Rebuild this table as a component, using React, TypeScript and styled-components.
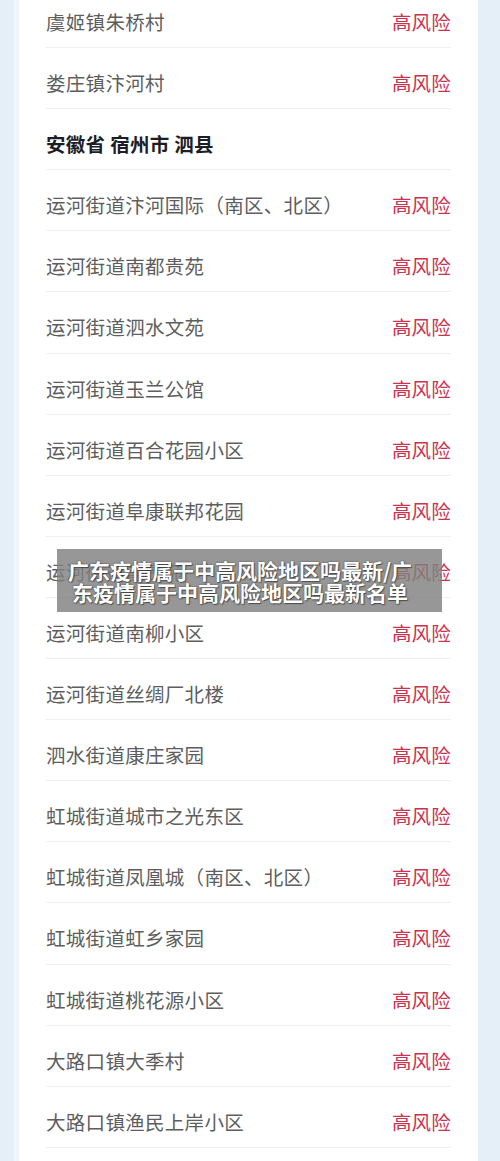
import styled, { createGlobalStyle } from 'styled-components';

const GlobalStyle = createGlobalStyle`
    html, body {
        margin: 0;
        padding: 0;
        background: #e4eff8;
        font-family: 'Noto Sans CJK SC', 'Noto Sans', sans-serif;
    }
`;

const Page = styled.div`
    position: relative;
    width: 500px;
    height: 1161px;
    overflow: hidden;
    background: #e4eff8;
`;

const Card = styled.div`
    margin: -13px 0 0 19px;
    width: 459px;
    background: #ffffff;
    box-shadow: -5px 0 0 #eef5fb;
    padding: 0 27px 40px;
    box-sizing: border-box;
`;

const Row = styled.div`
    height: 61.1px;
    box-sizing: border-box;
    display: flex;
    justify-content: space-between;
    align-items: flex-start;
    padding-top: 25px;
    border-bottom: 1px solid #efefef;
`;

const Place = styled.span<{ $heading?: boolean }>`
    font-size: 19.5px;
    line-height: 20px;
    color: ${({ $heading }) => ($heading ? '#1c1d26' : '#5e5e5e')};
    font-weight: ${({ $heading }) => ($heading ? 700 : 400)};
    letter-spacing: 0.3px;
`;

const Risk = styled.span`
    font-size: 19.5px;
    line-height: 20px;
    color: #c9334d;
    letter-spacing: 0.2px;
`;

const TitleOverlay = styled.div`
    position: absolute;
    top: 549px;
    left: 57px;
    width: 385px;
    height: 63px;
    box-sizing: border-box;
    padding: 10px 19px 0 0;
    background: rgba(128, 128, 128, 0.82);
    color: #ffffff;
    font-size: 21px;
    line-height: 22px;
    font-weight: 700;
    text-align: center;
    text-shadow: 0 0 2px rgba(0, 0, 0, 0.55), 1px 1px 1px rgba(0, 0, 0, 0.4);
`;

const rows: { name: string; heading?: boolean }[] = [
    { name: '虞姬镇朱桥村' },
    { name: '娄庄镇汴河村' },
    { name: '安徽省 宿州市 泗县', heading: true },
    { name: '运河街道汴河国际（南区、北区）' },
    { name: '运河街道南都贵苑' },
    { name: '运河街道泗水文苑' },
    { name: '运河街道玉兰公馆' },
    { name: '运河街道百合花园小区' },
    { name: '运河街道阜康联邦花园' },
    { name: '运河街道富贵苑' },
    { name: '运河街道南柳小区' },
    { name: '运河街道丝绸厂北楼' },
    { name: '泗水街道康庄家园' },
    { name: '虹城街道城市之光东区' },
    { name: '虹城街道凤凰城（南区、北区）' },
    { name: '虹城街道虹乡家园' },
    { name: '虹城街道桃花源小区' },
    { name: '大路口镇大季村' },
    { name: '大路口镇渔民上岸小区' },
];

const App = () => (
    <>
        <GlobalStyle />
        <Page>
            <Card>
                {rows.map(row => (
                    <Row key={row.name}>
                        <Place $heading={row.heading}>{row.name}</Place>
                        {!row.heading && <Risk>高风险</Risk>}
                    </Row>
                ))}
            </Card>
            <TitleOverlay>
                广东疫情属于中高风险地区吗最新/广
                <br />
                东疫情属于中高风险地区吗最新名单
            </TitleOverlay>
        </Page>
    </>
);

export default App;
